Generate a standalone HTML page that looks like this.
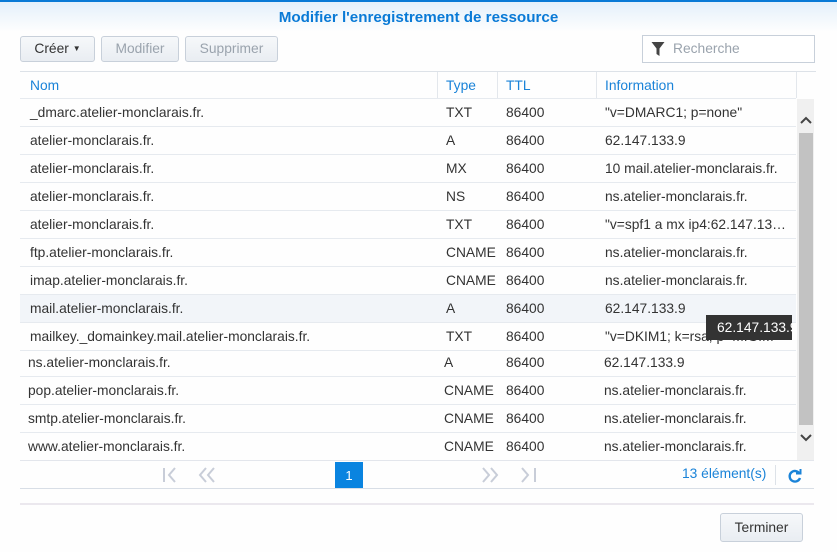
<!DOCTYPE html>
<html><head><style>
body{margin:0;width:837px;height:552px;background:#fefefe;font-family:"Liberation Sans",sans-serif;font-size:13.8px;color:#333;position:relative;overflow:hidden}
.a{position:absolute}
.top{left:0;top:0;width:837px;height:2px;background:#0a7ad6}
.hdr{left:0;top:2px;width:837px;height:30px;background:linear-gradient(#e4f0fb,#fefefe)}
.title{left:0;top:9px;width:837px;text-align:center;color:#0a7ad6;font-weight:bold;font-size:15.2px}
.btn{top:36px;height:26px;border:1px solid #c8d0da;border-radius:3px;background:linear-gradient(#f6f8fa,#e9edf2);box-sizing:border-box;text-align:center;line-height:24px;font-size:13.8px}
.row{left:20px;width:776px;height:27px;border-bottom:1px solid #e6eaef;line-height:27px;white-space:nowrap}
.row span{position:absolute}
.c1{left:10px}.c2{left:426px}.c3{left:486px}.c4{left:585px}
.th{color:#1a83d8}
.vs{width:1px;background:#e3e7ec;top:72px;height:26px}
</style></head><body>
<div class="a top"></div><div class="a hdr"></div>
<div class="a title">Modifier l'enregistrement de ressource</div>
<div class="a btn" style="left:20px;width:75px">Créer <span style="font-size:8px;vertical-align:2px">▼</span></div>
<div class="a btn" style="left:101px;width:78px;color:#9aa3ad">Modifier</div>
<div class="a btn" style="left:185px;width:93px;color:#9aa3ad">Supprimer</div>
<div class="a" style="left:642px;top:35px;width:173px;height:28px;border:1px solid #c8d0da;box-sizing:border-box;background:#fff"></div>
<svg class="a" style="left:651px;top:41px" width="14" height="16" viewBox="0 0 14 16"><path d="M0.5 1H13.5L8.5 7.5V15L5.5 13V7.5Z" fill="#444"/></svg>
<div class="a" style="left:673px;top:41px;color:#9aa3ad">Recherche</div>
<div class="a" style="left:20px;top:71px;width:796px;height:1px;background:#dde2e8"></div>
<div class="a row th" style="top:72px;height:26px"><span class="c1">Nom</span><span class="c2">Type</span><span class="c3">TTL</span><span class="c4">Information</span></div>
<div class="a vs" style="left:437px"></div><div class="a vs" style="left:497px"></div><div class="a vs" style="left:596px"></div><div class="a vs" style="left:796px"></div>
<div class="a" style="left:20px;top:295px;width:776px;height:27px;background:#f2f5f9"></div>
<div class="a" style="left:797px;top:99px;width:17px;height:361px;background:#f0f0f0"></div>
<div class="a" style="left:799px;top:133px;width:14px;height:292px;background:#c2c2c2"></div>
<svg class="a" style="left:799px;top:114px" width="14" height="12"><path d="M2 9L7 4L12 9" fill="none" stroke="#444" stroke-width="2"/></svg>
<svg class="a" style="left:799px;top:432px" width="14" height="12"><path d="M2 3L7 8L12 3" fill="none" stroke="#444" stroke-width="2"/></svg>
<div class="a row" style="top:99px"><span class="c1">_dmarc.atelier-monclarais.fr.</span><span class="c2">TXT</span><span class="c3">86400</span><span class="c4">"v=DMARC1; p=none"</span></div>
<div class="a row" style="top:127px"><span class="c1">atelier-monclarais.fr.</span><span class="c2">A</span><span class="c3">86400</span><span class="c4">62.147.133.9</span></div>
<div class="a row" style="top:155px"><span class="c1">atelier-monclarais.fr.</span><span class="c2">MX</span><span class="c3">86400</span><span class="c4">10 mail.atelier-monclarais.fr.</span></div>
<div class="a row" style="top:183px"><span class="c1">atelier-monclarais.fr.</span><span class="c2">NS</span><span class="c3">86400</span><span class="c4">ns.atelier-monclarais.fr.</span></div>
<div class="a row" style="top:211px"><span class="c1">atelier-monclarais.fr.</span><span class="c2">TXT</span><span class="c3">86400</span><span class="c4">"v=spf1 a mx ip4:62.147.13…</span></div>
<div class="a row" style="top:239px"><span class="c1">ftp.atelier-monclarais.fr.</span><span class="c2">CNAME</span><span class="c3">86400</span><span class="c4">ns.atelier-monclarais.fr.</span></div>
<div class="a row" style="top:267px"><span class="c1">imap.atelier-monclarais.fr.</span><span class="c2">CNAME</span><span class="c3">86400</span><span class="c4">ns.atelier-monclarais.fr.</span></div>
<div class="a row" style="top:295px"><span class="c1">mail.atelier-monclarais.fr.</span><span class="c2">A</span><span class="c3">86400</span><span class="c4">62.147.133.9</span></div>
<div class="a row" style="top:323px"><span class="c1">mailkey._domainkey.mail.atelier-monclarais.fr.</span><span class="c2">TXT</span><span class="c3">86400</span><span class="c4">"v=DKIM1; k=rsa; p=MIGfM</span></div>
<div class="a row" style="top:349px"><span class="c1" style="left:8px">ns.atelier-monclarais.fr.</span><span class="c2" style="left:424px">A</span><span class="c3">86400</span><span class="c4" style="left:584px">62.147.133.9</span></div>
<div class="a row" style="top:377px"><span class="c1" style="left:8px">pop.atelier-monclarais.fr.</span><span class="c2" style="left:424px">CNAME</span><span class="c3">86400</span><span class="c4" style="left:584px">ns.atelier-monclarais.fr.</span></div>
<div class="a row" style="top:405px"><span class="c1" style="left:8px">smtp.atelier-monclarais.fr.</span><span class="c2" style="left:424px">CNAME</span><span class="c3">86400</span><span class="c4" style="left:584px">ns.atelier-monclarais.fr.</span></div>
<div class="a row" style="top:433px;border:0"><span class="c1" style="left:8px">www.atelier-monclarais.fr.</span><span class="c2" style="left:424px">CNAME</span><span class="c3">86400</span><span class="c4" style="left:584px">ns.atelier-monclarais.fr.</span></div>
<div class="a" style="left:706px;top:315px;width:86px;height:25px;background:#333;color:#fff;line-height:25px;padding-left:11px;box-sizing:border-box;overflow:hidden;white-space:nowrap">62.147.133.9</div>
<div class="a" style="left:20px;top:460px;width:794px;height:1px;background:#e3e6ec"></div>
<div class="a" style="left:20px;top:488px;width:794px;height:1px;background:#d8dee6"></div>
<svg class="a" style="left:160px;top:466px" width="380" height="18" fill="none" stroke="#c8cdd8" stroke-width="2">
<path d="M4 2V16M15 2L9 9L15 16"/>
<path d="M46 2L40 9L46 16M54 2L48 9L54 16"/>
<path d="M323 2L329 9L323 16M331 2L337 9L331 16"/>
<path d="M362 2L368 9L362 16M375 2V16"/>
</svg>
<div class="a" style="left:335px;top:462px;width:28px;height:26px;background:#0a84e0;color:#fff;text-align:center;line-height:27px;font-size:13px">1</div>
<div class="a" style="left:682px;top:466px;color:#1a83d8">13 élément(s)</div>
<div class="a" style="left:775px;top:465px;width:1px;height:20px;background:#dde2e8"></div>
<svg class="a" style="left:787px;top:468px" width="16" height="16" fill="none" stroke="#1a83d8" stroke-width="2.4"><path d="M12.5 5.5A5.3 5.3 0 1 0 13 10"/><path d="M9 5.5H13.5V1" stroke-width="2"/></svg>
<div class="a" style="left:20px;top:503px;width:794px;height:2px;background:#ebe8ee"></div>
<div class="a btn" style="left:720px;top:513px;width:83px;height:29px;line-height:28px">Terminer</div>
</body></html>
